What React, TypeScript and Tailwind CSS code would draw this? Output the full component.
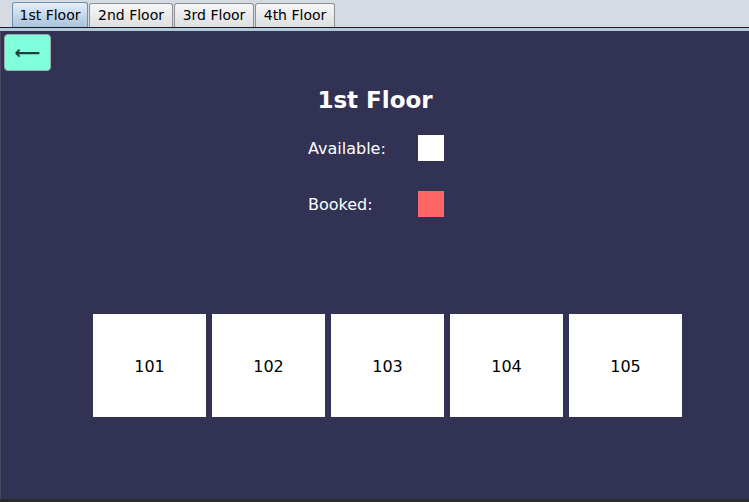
const tabs = [
  { label: '1st Floor', w: 'w-[76px]' },
  { label: '2nd Floor', w: 'w-[84px]' },
  { label: '3rd Floor', w: 'w-[80px]' },
  { label: '4th Floor', w: 'w-[80px]' },
];
const rooms = ['101', '102', '103', '104', '105'];

function Tab({ label, w, active }: { label: string; w: string; active: boolean }) {
  return (
    <div
      className={
        active
          ? `${w} h-[25px] flex items-center justify-center rounded-t-[3px] border border-b-0 border-[#6f8fb0] bg-gradient-to-b from-[#e4eef8] to-[#a9c3dc] text-[14px] text-black`
          : `${w} h-[24px] flex items-center justify-center rounded-t-[3px] border border-b-0 border-[#8d9097] bg-gradient-to-b from-[#f6f6f6] to-[#dedfe2] text-[14px] text-black`
      }
    >
      {label}
    </div>
  );
}

export default function App() {
  return (
    <div
      className="w-[749px] h-[502px] flex flex-col bg-[#d6dae2] overflow-hidden"
      style={{ fontFamily: '"DejaVu Sans", Verdana, sans-serif' }}
    >
      {/* Tab strip */}
      <div className="h-[27px] flex items-end pl-[12px] gap-[1px]">
        {tabs.map((t, i) => (
          <Tab key={t.label} label={t.label} w={t.w} active={i === 0} />
        ))}
      </div>
      <div className="h-[1px] bg-[#1a1a22]" />
      <div className="h-[3px] bg-[#b4c8dc]" />

      {/* Content */}
      <div className="flex-1 flex flex-col bg-[#323255] border-l border-[#4a4a60]">
        <div className="pl-[3px] pt-[3px]">
          <button className="w-[47px] h-[37px] rounded-[4px] border border-[#9aa] bg-[#7fffdc] flex items-center justify-center text-[18px] font-bold leading-none text-[#1a3f38]">
            ⟵
          </button>
        </div>

        <h1 className="mt-[14px] text-center text-[23px] font-bold text-white leading-[30px]">
          1st Floor
        </h1>

        <div className="mt-[20px] mx-auto grid grid-cols-[110px_26px] gap-y-[30px] items-center pl-[2px]">
          <span className="text-[16px] text-white pt-[2px]">Available:</span>
          <div className="w-[26px] h-[26px] bg-white" />
          <span className="text-[16px] text-white pt-[2px]">Booked:</span>
          <div className="w-[26px] h-[26px] bg-[#ff6666]" />
        </div>

        <div className="mt-[97px] ml-[92px] flex gap-[6px]">
          {rooms.map((r) => (
            <div
              key={r}
              className="w-[113px] h-[103px] pt-[3px] bg-white flex items-center justify-center text-[16px] text-black"
            >
              {r}
            </div>
          ))}
        </div>
      </div>
      <div className="h-[3px] bg-[#2b2b2b]" />
    </div>
  );
}
